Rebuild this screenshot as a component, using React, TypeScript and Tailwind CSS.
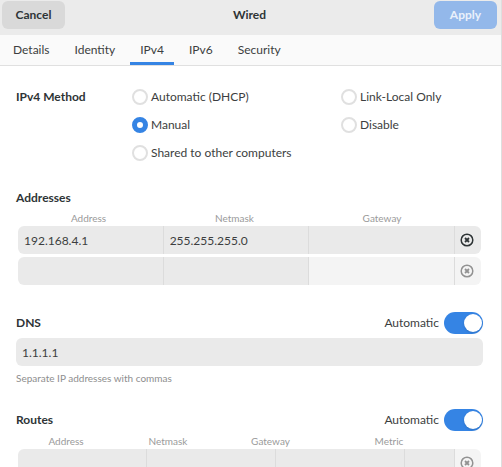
import { useState } from "react";
import type { ReactNode } from "react";

const tabs = ["Details", "Identity", "IPv4", "IPv6", "Security"];

const methods = [
  { id: "auto", label: "Automatic (DHCP)" },
  { id: "link-local", label: "Link-Local Only" },
  { id: "manual", label: "Manual" },
  { id: "disable", label: "Disable" },
  { id: "shared", label: "Shared to other computers" },
];

function RemoveButton({ disabled }: { disabled?: boolean }) {
  return (
    <button
      type="button"
      aria-label="Remove"
      disabled={disabled}
      className="flex h-7 w-full items-center justify-center pr-0.5 text-[#2e3436] disabled:text-[#929292]"
    >
      <svg width="14" height="14" viewBox="0 0 14 14" fill="none" stroke="currentColor">
        <circle cx="7" cy="7" r="5.8" strokeWidth="1.5" />
        <path d="M5 5l4 4M9 5l-4 4" strokeWidth="1.8" />
      </svg>
    </button>
  );
}

function Cell({ label, value, pale }: { label: string; value?: string; pale?: boolean }) {
  return (
    <td className={`border-r border-[#dcdcdc] p-0 ${pale ? "bg-[#f4f4f4]" : "bg-[#eaeaea]"}`}>
      <input
        aria-label={label}
        defaultValue={value}
        className="block h-7 w-full bg-transparent px-1.5 outline-none"
      />
    </td>
  );
}

function Switch({ label }: { label: string }) {
  return (
    <label className="flex items-center gap-[5px]">
      Automatic
      <input type="checkbox" role="switch" aria-label={label} defaultChecked className="peer sr-only" />
      <span className="flex h-[22px] w-[39px] items-center rounded-full bg-[#c8c8c8] px-px peer-checked:justify-end peer-checked:bg-[#3584e4]">
        <span className="size-[18px] rounded-full bg-white shadow-sm" />
      </span>
    </label>
  );
}

function SectionHead({ title, children }: { title: string; children?: ReactNode }) {
  return (
    <div className="flex items-center justify-between">
      <h2 className="font-bold text-[#2e3436]">{title}</h2>
      {children}
    </div>
  );
}

export default function App() {
  const [method, setMethod] = useState("manual");
  return (
    <div className="flex h-screen flex-col overflow-hidden border-r border-[#dedede] bg-white font-[Lato,'Noto_Sans',sans-serif] text-[12px] leading-5 text-[#3c3e40]">
      <header className="grid shrink-0 grid-cols-[1fr_auto_1fr] items-start bg-[#ebebeb] px-0.5 pb-[6px] pr-1 pt-px text-[#2e3436]">
        <button type="button" className="h-7 w-[63px] rounded-md bg-[#d9d9d9] font-bold">
          Cancel
        </button>
        <h1 className="leading-7 font-bold">Wired</h1>
        <button type="button" className="h-7 w-[63px] justify-self-end rounded-md bg-[#93b8ea] font-bold text-[#eaf1fb]">
          Apply
        </button>
      </header>

      <nav className="flex shrink-0 gap-[5px] border-b border-[#e0e0e0] bg-[#fafafa] px-[3px]">
        {tabs.map((tab) => (
          <button
            key={tab}
            type="button"
            className={`h-[30px] border-b-3 px-[10px] pt-[3px] ${tab === "IPv4" ? "border-[#3584e4]" : "border-transparent"}`}
          >
            {tab}
          </button>
        ))}
      </nav>

      <main className="min-h-0 flex-1 overflow-hidden pl-4 pr-[18px] pt-[17px]">
        <fieldset className="grid grid-cols-[116px_1fr] items-start">
          <legend className="float-left leading-7 font-bold text-[#2e3436]">IPv4 Method</legend>
          <div className="grid grid-cols-[209px_1fr]">
            {methods.map((m) => (
              <label key={m.id} className="flex h-7 items-center gap-[3px]">
                <input
                  type="radio"
                  name="method"
                  checked={method === m.id}
                  onChange={() => setMethod(m.id)}
                  className="size-4 appearance-none rounded-full border-2 border-[#e0e0e0] bg-white checked:border-5 checked:border-[#3584e4]"
                />
                {m.label}
              </label>
            ))}
          </div>
        </fieldset>

        <section className="mt-[21px]">
          <SectionHead title="Addresses" />
          <table className="block px-0.5">
            <thead className="block">
              <tr className="grid grid-cols-[141fr_151fr_144fr_27px] pb-px pt-[3px] text-center text-[10px] leading-[14px] text-[#9a9a9a]">
                <th className="font-normal">Address</th>
                <th className="font-normal">Netmask</th>
                <th className="font-normal">Gateway</th>
              </tr>
            </thead>
            <tbody className="flex flex-col gap-[3px]">
              <tr className="grid grid-cols-[1fr_1fr_1fr_26px] overflow-hidden rounded-md">
                <Cell label="Address" value="192.168.4.1" />
                <Cell label="Netmask" value="255.255.255.0" />
                <Cell label="Gateway" />
                <td className="bg-[#eaeaea] p-0"><RemoveButton /></td>
              </tr>
              <tr className="grid grid-cols-[1fr_1fr_1fr_26px] overflow-hidden rounded-md">
                <Cell label="Address" />
                <Cell label="Netmask" />
                <Cell label="Gateway" pale />
                <td className="bg-[#f4f4f4] p-0"><RemoveButton disabled /></td>
              </tr>
            </tbody>
          </table>
        </section>

        <section className="mt-[27px]">
          <SectionHead title="DNS"><Switch label="Automatic DNS" /></SectionHead>
          <input
            aria-label="DNS servers"
            defaultValue="1.1.1.1"
            className="mt-1 block h-7 w-full rounded-md bg-[#eaeaea] px-1.5 outline-none"
          />
          <p className="mt-0.5 text-[10px] text-[#8e8e8e]">Separate IP addresses with commas</p>
        </section>

        <section className="mt-[21px]">
          <SectionHead title="Routes"><Switch label="Automatic routes" /></SectionHead>
          <table className="block px-0.5">
            <thead className="block">
              <tr className="grid grid-cols-[96fr_108fr_97fr_140fr_22px] pb-px pt-[3px] text-center text-[10px] leading-[14px] text-[#9a9a9a]">
                <th className="font-normal">Address</th>
                <th className="font-normal">Netmask</th>
                <th className="font-normal">Gateway</th>
                <th className="font-normal">Metric</th>
              </tr>
            </thead>
            <tbody className="block">
              <tr className="grid grid-cols-[1fr_1fr_1fr_50px_26px] overflow-hidden rounded-md">
                <Cell label="Address" />
                <Cell label="Netmask" />
                <Cell label="Gateway" />
                <Cell label="Metric" />
                <td className="bg-[#f4f4f4] p-0"><RemoveButton disabled /></td>
              </tr>
            </tbody>
          </table>
        </section>
      </main>
    </div>
  );
}
